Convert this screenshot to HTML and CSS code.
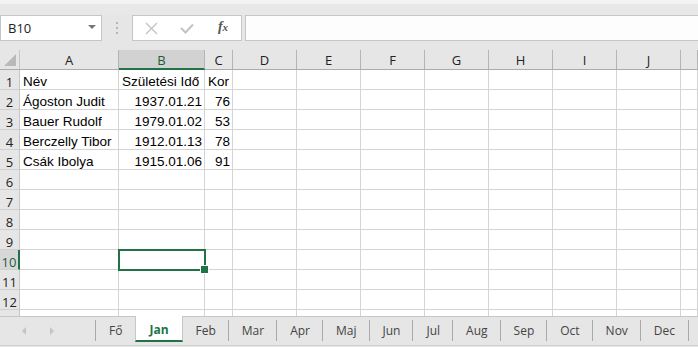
FILE: index.html
```html
<!DOCTYPE html>
<html lang="hu">
<head>
  <meta charset="UTF-8">
  <meta name="viewport" content="width=device-width, initial-scale=1.0">
  <title>Születési idők</title>
  <link rel="stylesheet" href="styles.css">
</head>
<body>
  <div class="title-strip"></div>
  <div class="ribbon-edge"></div>

  <div class="formula-bar">
    <div class="name-box">
      <span>B10</span>
      <span class="caret"></span>
    </div>
    <div class="grip">
      <span></span><span></span><span></span>
    </div>
    <div class="fx-box">
      <span class="fx-slot">
        <svg width="13" height="13" viewBox="0 0 13 13"><path d="M1 1 L12 12 M12 1 L1 12" stroke="#c3c3c3" stroke-width="1.4" fill="none"/></svg>
      </span>
      <span class="fx-slot">
        <svg width="14" height="11" viewBox="0 0 14 11"><path d="M1 5 L5.5 9.5 L13 1.5" stroke="#c3c3c3" stroke-width="2" fill="none"/></svg>
      </span>
      <span class="fx-slot fx">f<small>x</small></span>
    </div>
    <div class="formula-input"></div>
  </div>

  <div class="sheet">
    <div class="row head">
      <div class="corner"></div>
      <div>A</div><div class="sel">B</div><div>C</div><div>D</div><div>E</div>
      <div>F</div><div>G</div><div>H</div><div>I</div><div>J</div><div></div>
    </div>
    <div class="row">
      <div class="rh">1</div>
      <div>Név</div><div>Születési Idő</div><div>Kor</div>
      <div></div><div></div><div></div><div></div><div></div><div></div><div></div><div></div>
    </div>
    <div class="row">
      <div class="rh">2</div>
      <div>Ágoston Judit</div><div class="num">1937.01.21</div><div class="num">76</div>
      <div></div><div></div><div></div><div></div><div></div><div></div><div></div><div></div>
    </div>
    <div class="row">
      <div class="rh">3</div>
      <div>Bauer Rudolf</div><div class="num">1979.01.02</div><div class="num">53</div>
      <div></div><div></div><div></div><div></div><div></div><div></div><div></div><div></div>
    </div>
    <div class="row">
      <div class="rh">4</div>
      <div>Berczelly Tibor</div><div class="num">1912.01.13</div><div class="num">78</div>
      <div></div><div></div><div></div><div></div><div></div><div></div><div></div><div></div>
    </div>
    <div class="row">
      <div class="rh">5</div>
      <div>Csák Ibolya</div><div class="num">1915.01.06</div><div class="num">91</div>
      <div></div><div></div><div></div><div></div><div></div><div></div><div></div><div></div>
    </div>
    <div class="row">
      <div class="rh">6</div>
      <div></div><div></div><div></div><div></div><div></div><div></div><div></div><div></div><div></div><div></div><div></div>
    </div>
    <div class="row">
      <div class="rh">7</div>
      <div></div><div></div><div></div><div></div><div></div><div></div><div></div><div></div><div></div><div></div><div></div>
    </div>
    <div class="row">
      <div class="rh">8</div>
      <div></div><div></div><div></div><div></div><div></div><div></div><div></div><div></div><div></div><div></div><div></div>
    </div>
    <div class="row">
      <div class="rh">9</div>
      <div></div><div></div><div></div><div></div><div></div><div></div><div></div><div></div><div></div><div></div><div></div>
    </div>
    <div class="row">
      <div class="rh sel">10</div>
      <div></div><div class="active-cell"></div><div></div><div></div><div></div><div></div><div></div><div></div><div></div><div></div><div></div>
    </div>
    <div class="row">
      <div class="rh">11</div>
      <div></div><div></div><div></div><div></div><div></div><div></div><div></div><div></div><div></div><div></div><div></div>
    </div>
    <div class="row">
      <div class="rh">12</div>
      <div></div><div></div><div></div><div></div><div></div><div></div><div></div><div></div><div></div><div></div><div></div>
    </div>
    <div class="row">
      <div class="rh"></div>
      <div></div><div></div><div></div><div></div><div></div><div></div><div></div><div></div><div></div><div></div><div></div>
    </div>
  </div>

  <div class="tab-bar">
    <div class="tab-nav">
      <span class="arrow left"></span>
      <span class="arrow right"></span>
    </div>
    <div class="tab">Fő</div>
    <div class="tab active">Jan</div>
    <div class="tab">Feb</div>
    <div class="tab">Mar</div>
    <div class="tab">Apr</div>
    <div class="tab">Maj</div>
    <div class="tab">Jun</div>
    <div class="tab">Jul</div>
    <div class="tab">Aug</div>
    <div class="tab">Sep</div>
    <div class="tab">Oct</div>
    <div class="tab">Nov</div>
    <div class="tab last">Dec</div>
  </div>
</body>
</html>
```

FILE: styles.css
```css
* {
  margin: 0;
  padding: 0;
  box-sizing: border-box;
}

body {
  width: 698px;
  height: 347px;
  overflow: hidden;
  background-color: #e6e6e6;
  font-family: "Liberation Sans", Arial, sans-serif;
  color: #000;
}

.title-strip {
  height: 4px;
  background-color: #f3f3f3;
}

.ribbon-edge {
  height: 11px;
  background-color: #e8e8e8;
}

/* formula bar */
.formula-bar {
  display: flex;
  height: 26px;
  margin-bottom: 9px;
}

.name-box {
  width: 102px;
  display: flex;
  align-items: center;
  justify-content: space-between;
  padding: 0 5px 0 7px;
  background-color: #fff;
  border: 1px solid #c6c6c6;
  font-family: "Open Sans", "Noto Sans", sans-serif;
  font-size: 13px;
  color: #222;
}

.caret {
  width: 0;
  height: 0;
  border-left: 4px solid transparent;
  border-right: 4px solid transparent;
  border-top: 4px solid #777;
  margin-top: -2px;
}

.grip {
  width: 30px;
  display: flex;
  flex-direction: column;
  align-items: center;
  justify-content: center;
  gap: 3px;
}

.grip span {
  width: 2px;
  height: 2px;
  background-color: #b4b4b4;
}

.fx-box {
  width: 110px;
  display: flex;
  background-color: #fff;
  border: 1px solid #c6c6c6;
}

.fx-slot {
  width: 36px;
  display: flex;
  align-items: center;
  justify-content: center;
}

.fx {
  font-family: "Liberation Serif", serif;
  font-style: italic;
  font-weight: bold;
  font-size: 14px;
  color: #555;
  padding-bottom: 2px;
}

.fx small {
  font-size: 11px;
}

.formula-input {
  flex: 1;
  margin-left: 3px;
  background-color: #fdfdfd;
  border: 1px solid #c6c6c6;
  border-right: none;
}

/* grid */
.sheet {
  height: 266px;
  overflow: hidden;
  background-color: #fff;
}

.row {
  display: grid;
  grid-template-columns: 20px 99px 86px 28px repeat(7, 64px) 1fr;
  height: 20px;
}

.row > div {
  height: 20px;
  border-right: 1px solid #d4d4d4;
  border-bottom: 1px solid #d4d4d4;
  padding: 2px 3px 0 3px;
  font-size: 13.5px;
  line-height: 20px;
  white-space: nowrap;
  overflow: hidden;
}

.row > div.num {
  text-align: right;
  padding-right: 2px;
}

.row.head > div {
  background-color: #e6e6e6;
  border-right-color: #b4b4b4;
  border-bottom-color: #ababab;
  padding: 0;
  text-align: center;
  font-family: "Open Sans", "Noto Sans", sans-serif;
  font-size: 13px;
  color: #222;
}

.row.head > div.sel {
  background-color: #d2d2d2;
  border-bottom: 2px solid #217346;
  color: #1e5c3a;
}

.row.head > .corner {
  position: relative;
  border-right-color: #c6c6c6;
}

.corner::after {
  content: "";
  position: absolute;
  right: 3px;
  bottom: 3px;
  width: 0;
  height: 0;
  border-left: 12px solid transparent;
  border-bottom: 12px solid #b9b9b9;
}

.row > div.rh {
  background-color: #e6e6e6;
  border-right-color: #c6c6c6;
  border-bottom-color: #d0d0d0;
  padding: 2px 0 0 0;
  text-align: center;
  font-family: "Open Sans", "Noto Sans", sans-serif;
  font-size: 13px;
  color: #222;
}

.row > div.rh.sel {
  background-color: #d8d8d8;
  border-right: 2px solid #217346;
  color: #1e5c3a;
}

.row > div.active-cell {
  position: relative;
  overflow: visible;
  outline: 2px solid #217346;
  outline-offset: -1px;
  z-index: 1;
}

.active-cell::after {
  content: "";
  position: absolute;
  right: -5px;
  bottom: -5px;
  width: 7px;
  height: 7px;
  background-color: #217346;
  border: 1px solid #fff;
}

/* sheet tabs */
.tab-bar {
  display: flex;
  align-items: flex-start;
  height: 30px;
  border-top: 1px solid #c6c6c6;
  border-bottom: 1px solid #d0d0d0;
  font-family: "Open Sans", "Noto Sans", sans-serif;
  font-size: 12px;
  color: #444;
}

.tab-nav {
  width: 96px;
  height: 28px;
  display: flex;
  align-items: center;
  padding-left: 22px;
  gap: 24px;
}

.arrow {
  width: 0;
  height: 0;
  border-top: 4px solid transparent;
  border-bottom: 4px solid transparent;
}

.arrow.left {
  border-right: 4px solid #c4c4c4;
}

.arrow.right {
  border-left: 4px solid #c4c4c4;
}

.tab {
  position: relative;
  height: 28px;
  line-height: 28px;
  padding: 0 13px;
}

.tab::before {
  content: "";
  position: absolute;
  left: -1px;
  top: 3px;
  height: 21px;
  border-left: 1px solid #a9a9a9;
}

.tab.last::after {
  content: "";
  position: absolute;
  right: -1px;
  top: 3px;
  height: 21px;
  border-left: 1px solid #a9a9a9;
}

.tab.active {
  height: 26px;
  margin-top: -1px;
  padding-top: 4px;
  line-height: 20px;
  background-color: #fff;
  border-left: 1px solid #c6c6c6;
  border-right: 1px solid #c6c6c6;
  border-bottom: 2px solid #217346;
  font-weight: bold;
  color: #217346;
}

.tab.active::before,
.tab.active + .tab::before {
  display: none;
}
```
